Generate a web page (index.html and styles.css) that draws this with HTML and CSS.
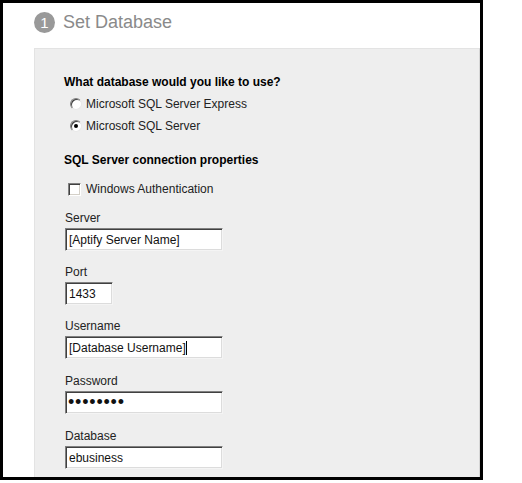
FILE: index.html
```html
<!DOCTYPE html>
<html lang="en">
  <head>
    <meta charset="UTF-8" />
    <meta name="viewport" content="width=device-width, initial-scale=1.0" />
    <title>Set Database</title>
    <link rel="stylesheet" href="styles.css">
  </head>
  <body>
    <div class="frame">
      <header class="step-head">
        <span class="step-num">1</span>
        <h1>Set Database</h1>
      </header>

      <div class="panel">
        <h2>What database would you like to use?</h2>
        <label class="choice radio-row">
          <input type="radio" name="dbtype" />
          <span>Microsoft SQL Server Express</span>
        </label>
        <label class="choice radio-row">
          <input type="radio" name="dbtype" checked />
          <span>Microsoft SQL Server</span>
        </label>

        <h2 class="second">SQL Server connection properties</h2>
        <label class="choice check-row">
          <input type="checkbox" />
          <span>Windows Authentication</span>
        </label>

        <div class="field">
          <label for="server">Server</label>
          <input type="text" id="server" class="wide" value="[Aptify Server Name]" />
        </div>
        <div class="field">
          <label for="port">Port</label>
          <input type="text" id="port" class="short" value="1433" />
        </div>
        <div class="field">
          <label for="username">Username</label>
          <div class="with-caret">
            <input type="text" id="username" class="wide" value="[Database Username]" />
            <span class="caret"></span>
          </div>
        </div>
        <div class="field loose">
          <label for="password">Password</label>
          <input type="password" id="password" class="wide" value="password" />
        </div>
        <div class="field loose">
          <label for="database">Database</label>
          <input type="text" id="database" class="wide" value="ebusiness" />
        </div>
      </div>
    </div>
  </body>
</html>
```

FILE: styles.css
```css
body {
  margin: 0;
  padding: 0;
  background: #fff;
  font-family: "Liberation Sans", Arial, sans-serif;
  font-size: 12px;
  color: #222;
}

.frame {
  width: 477px;
  height: 474px;
  border: 3px solid #000;
  display: flex;
  flex-direction: column;
  overflow: hidden;
}

.step-head {
  height: 45px;
  box-sizing: border-box;
  padding: 9px 0 0 31px;
  display: flex;
  align-items: flex-start;
  gap: 8px;
}

.step-num {
  width: 21px;
  height: 21px;
  border-radius: 50%;
  background: #999;
  color: #fff;
  font-size: 15px;
  line-height: 21px;
  text-align: center;
}

.step-head h1 {
  margin: 0;
  font-size: 18px;
  font-weight: normal;
  line-height: 21px;
  color: #8a8a8a;
}

.panel {
  flex: 1;
  margin-left: 31px;
  background: #eeeeee;
  border-top: 1px solid #e3e3e3;
  border-left: 1px solid #e3e3e3;
  border-right: 1px solid #d6d6d6;
  padding: 22px 0 0 29px;
}

h2 {
  margin: 0;
  font-size: 12px;
  font-weight: bold;
  line-height: 22px;
  color: #000;
}

h2.second {
  margin-top: 12px;
}

.choice {
  display: flex;
  align-items: center;
  height: 22px;
  color: #222;
}

.choice input {
  appearance: none;
  margin: 0;
  background: #fff;
  box-sizing: border-box;
  position: relative;
}

.radio-row input {
  width: 12px;
  height: 12px;
  margin-left: 6px;
  margin-right: 4px;
  border-radius: 50%;
  border: 1px solid;
  border-color: #808080 #e8e8e8 #e8e8e8 #808080;
  box-shadow: inset 1px 1px 0 #404040;
}

.radio-row input:checked::after {
  content: "";
  position: absolute;
  left: 3px;
  top: 3px;
  width: 4px;
  height: 4px;
  border-radius: 50%;
  background: #000;
}

.check-row {
  margin-top: 7px;
}

.check-row input {
  width: 13px;
  height: 13px;
  margin-left: 4px;
  margin-right: 5px;
  border: 1px solid;
  border-color: #808080 #ffffff #ffffff #808080;
  box-shadow: inset 1px 1px 0 #404040, inset -1px -1px 0 #d4d0c8;
}

.field {
  margin-left: 1px;
  margin-top: 14px;
}

.check-row + .field {
  margin-top: 11px;
}

.field.loose {
  margin-top: 15px;
}

.field label {
  display: block;
  line-height: 14px;
  margin-bottom: 3px;
  color: #222;
}

.field input {
  display: block;
  height: 23px;
  box-sizing: border-box;
  margin: 0;
  padding: 0 3px;
  font-family: "Liberation Sans", Arial, sans-serif;
  font-size: 12px;
  color: #111;
  background: #fff;
  border: 1px solid;
  border-color: #808080 #f4f4f4 #f4f4f4 #808080;
  box-shadow: inset 1px 1px 0 #404040, inset -1px -1px 0 #dcdcdc;
  outline: none;
}

.field input.wide {
  width: 158px;
}

.field input.short {
  width: 48px;
}

.field input[type="password"] {
  font-size: 18px;
  letter-spacing: 0.8px;
  padding-left: 2px;
}

.with-caret {
  position: relative;
  width: 158px;
}

.caret {
  position: absolute;
  left: 121px;
  top: 5px;
  width: 1px;
  height: 14px;
  background: #000;
}
```
